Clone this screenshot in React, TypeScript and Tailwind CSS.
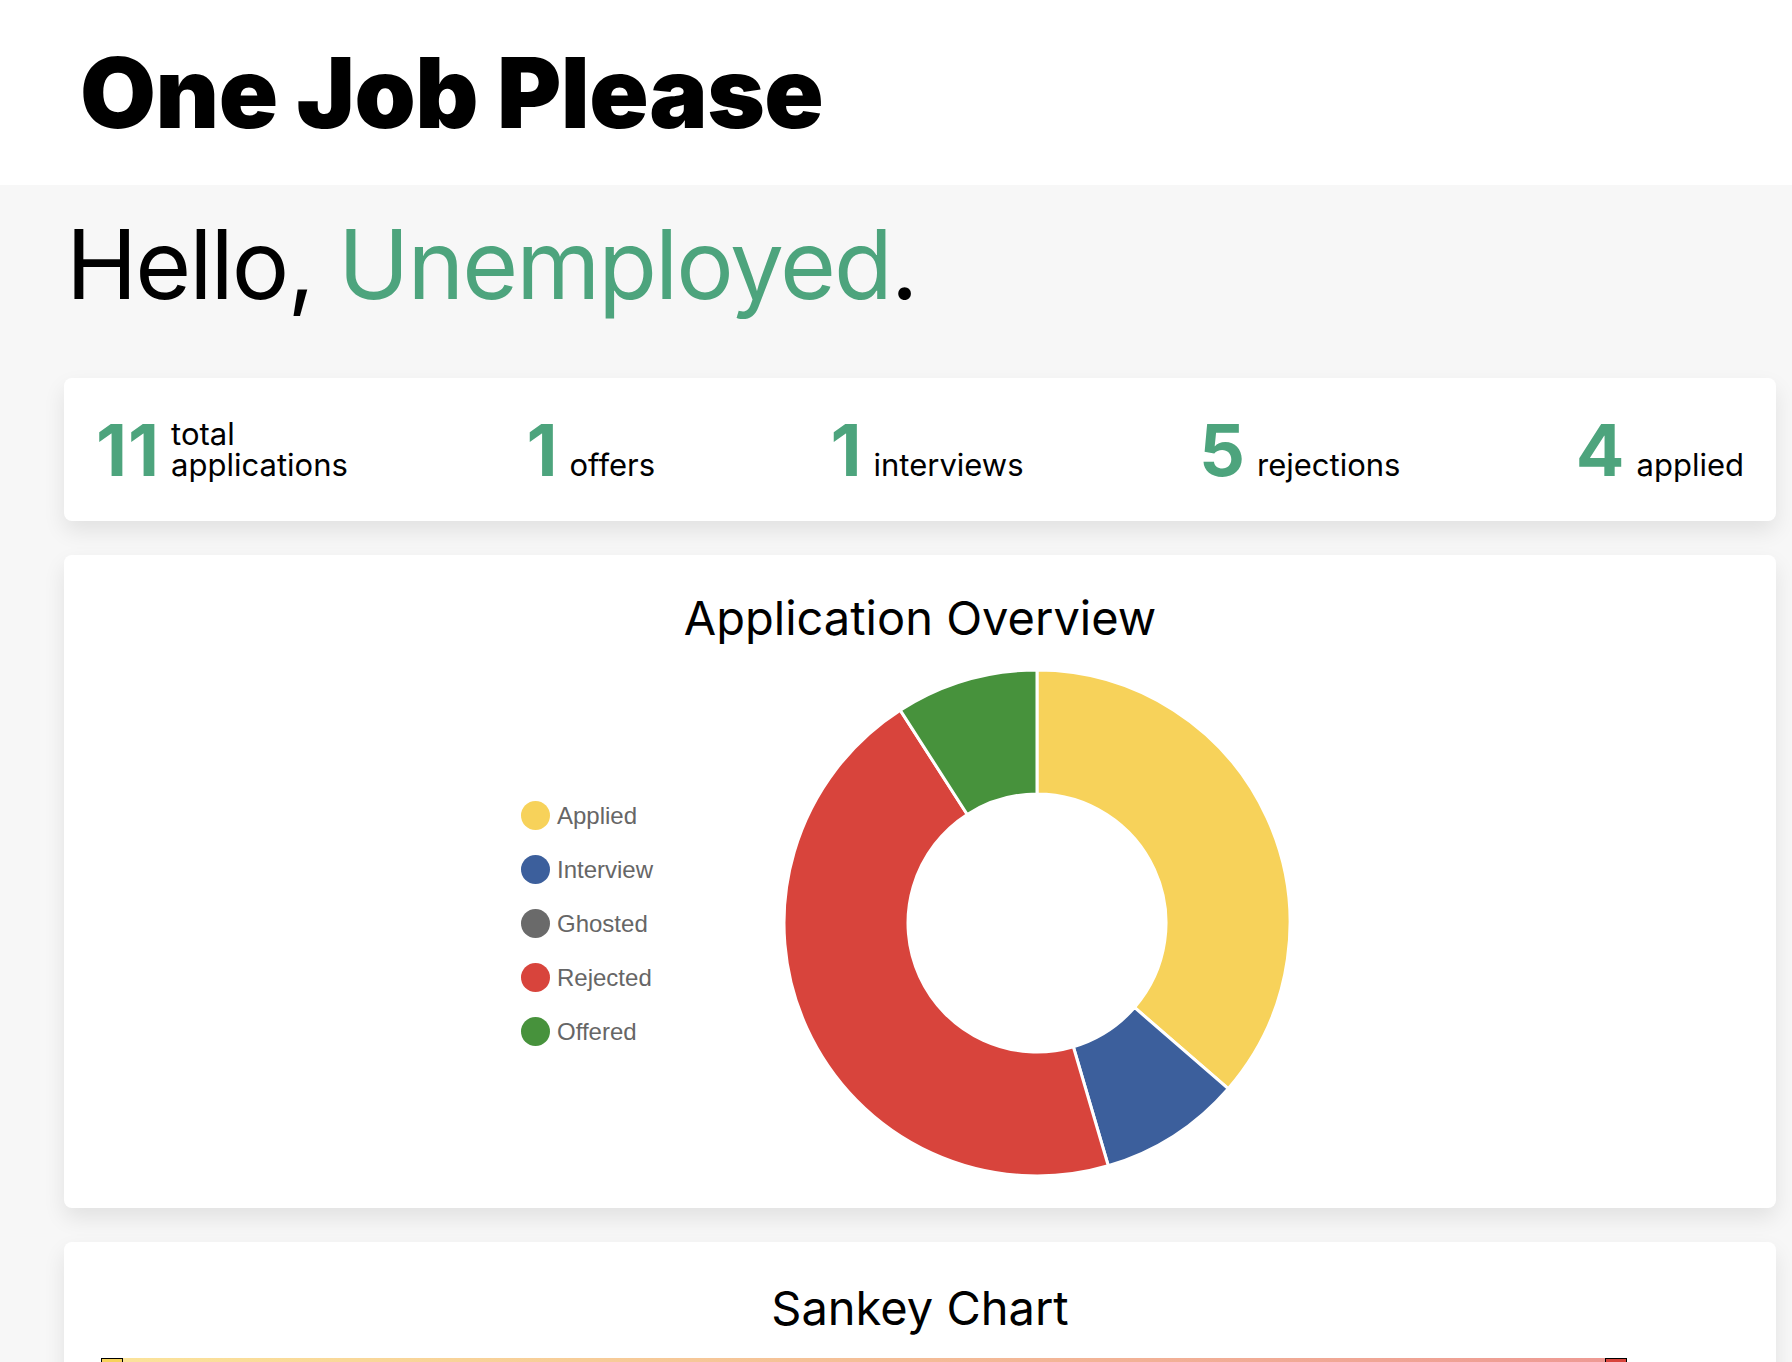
import React from 'react';

interface Slice {
    label: string;
    value: number;
    color: string;
}

const slices: Slice[] = [
    { label: 'Applied', value: 4, color: '#F7D25A' },
    { label: 'Interview', value: 1, color: '#3C5F9C' },
    { label: 'Ghosted', value: 0, color: '#6A6A6A' },
    { label: 'Rejected', value: 5, color: '#D8443C' },
    { label: 'Offered', value: 1, color: '#47923C' },
];

const stats = [
    { n: 11, label: 'total applications', wrap: true },
    { n: 1, label: 'offers' },
    { n: 1, label: 'interviews' },
    { n: 5, label: 'rejections' },
    { n: 4, label: 'applied' },
];

// donut arc path, angles in degrees clockwise from 12 o'clock
function arcPath(cx: number, cy: number, R: number, r: number, a0: number, a1: number) {
    const pt = (rad: number, a: number) => {
        const t = ((a - 90) * Math.PI) / 180;
        return [cx + rad * Math.cos(t), cy + rad * Math.sin(t)];
    };
    const large = a1 - a0 > 180 ? 1 : 0;
    const [x0, y0] = pt(R, a0);
    const [x1, y1] = pt(R, a1);
    const [x2, y2] = pt(r, a1);
    const [x3, y3] = pt(r, a0);
    return `M${x0} ${y0} A${R} ${R} 0 ${large} 1 ${x1} ${y1} L${x2} ${y2} A${r} ${r} 0 ${large} 0 ${x3} ${y3} Z`;
}

function Donut() {
    const total = slices.reduce((s, x) => s + x.value, 0);
    let acc = 0;
    return (
        <svg width="510" height="510" viewBox="0 0 510 510" className="shrink-0">
            {slices.map(s => {
                if (!s.value) return null;
                const a0 = (acc / total) * 360;
                acc += s.value;
                const a1 = (acc / total) * 360;
                return (
                    <path
                        key={s.label}
                        d={arcPath(255, 255, 253, 129, a0, a1)}
                        fill={s.color}
                        stroke="#fff"
                        strokeWidth="3"
                        strokeLinejoin="round"
                    />
                );
            })}
        </svg>
    );
}

export default function App() {
    return (
        <div className="min-h-screen bg-[#f7f7f7] font-['Inter',sans-serif] text-black">
            {/* Header */}
            <header className="h-[185px] bg-white flex items-center pl-[80px]">
                <h1 className="text-[98px] leading-none font-black tracking-[-0.5px]">One Job Please</h1>
            </header>

            <main className="pl-16 pr-4 pt-[31px]">
                <h2 className="text-[96px] leading-none tracking-[-2px] pl-[2px]">
                    Hello, <span className="text-[#4DA47D]">Unemployed</span>.
                </h2>

                {/* Stats */}
                <div className="mt-[66px] h-[143px] bg-white rounded-lg shadow-[0_10px_22px_rgba(0,0,0,0.09)] px-8 flex items-center justify-between">
                    {stats.map(s => (
                        <div key={s.label} className="flex items-end">
                            <span className="text-[72px] leading-none font-bold text-[#4DA47D] tracking-[1px]">{s.n}</span>
                            <span className={`ml-[11px] mb-[6px] text-[31px] leading-[31px] ${s.wrap ? 'w-[180px]' : ''}`}>{s.label}</span>
                        </div>
                    ))}
                </div>

                {/* Application overview */}
                <div className="mt-[34px] h-[653px] bg-white rounded-lg shadow-[0_10px_22px_rgba(0,0,0,0.09)] pt-[39px]">
                    <h3 className="text-center text-[47px] leading-none">Application Overview</h3>
                    <div className="flex items-center mt-[27px] pl-[457px]">
                        <ul className="w-[261px] flex flex-col gap-[25px] font-['Liberation_Sans',Arial,sans-serif] text-[24px] leading-[29px] text-[#666]">
                            {slices.map(s => (
                                <li key={s.label} className="flex items-center">
                                    <span className="w-[29px] h-[29px] rounded-full" style={{ backgroundColor: s.color }} />
                                    <span className="ml-[7px]">{s.label}</span>
                                </li>
                            ))}
                        </ul>
                        <Donut />
                    </div>
                </div>

                {/* Sankey */}
                <div className="mt-[34px] h-[600px] bg-white rounded-lg shadow-[0_10px_22px_rgba(0,0,0,0.09)] pt-[42px]">
                    <h3 className="text-center text-[47px] leading-none">Sankey Chart</h3>
                    <svg width="1711" height="300" viewBox="0 0 1711 300" className="mt-[27px] block">
                        <defs>
                            <linearGradient id="link" x1="0" x2="1" y1="0" y2="0">
                                <stop offset="0" stopColor="#FBE39A" />
                                <stop offset="1" stopColor="#EE9A94" />
                            </linearGradient>
                        </defs>
                        <rect x="59" y="0" width="1482" height="200" fill="url(#link)" />
                        <rect x="37.5" y="0.5" width="21" height="240" fill="#F7D25A" stroke="#000" />
                        <rect x="1541.5" y="0.5" width="21" height="140" fill="#D8443C" stroke="#000" />
                    </svg>
                </div>
            </main>
        </div>
    );
}
